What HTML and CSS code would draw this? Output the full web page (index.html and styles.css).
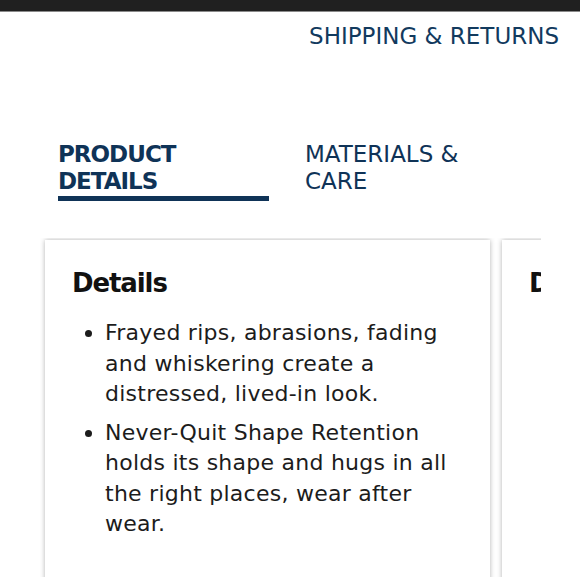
FILE: index.html
```html
<!DOCTYPE html>
<html>
<head>
<meta charset="utf-8">
<link rel="stylesheet" href="styles.css">
</head>
<body>
<div class="topbar"></div>
<div class="shiprow"><a class="ship">SHIPPING &amp; RETURNS</a></div>
<div class="tabs">
  <div class="tab active">PRODUCT<br>DETAILS</div>
  <div class="tab">MATERIALS &amp;<br>CARE</div>
</div>
<div class="viewport">
  <div class="track">
    <section class="card">
      <h2 class="card-title">Details</h2>
      <ul class="list">
        <li>Frayed rips, abrasions, fading and whiskering create a distressed, lived-in look.</li>
        <li>Never-Quit Shape Retention holds its shape and hugs in all the right places, wear after wear.</li>
      </ul>
    </section>
    <section class="card">
      <h2 class="card-title">Details</h2>
    </section>
  </div>
</div>
</body>
</html>
```
FILE: styles.css
```css
html, body { margin: 0; padding: 0; background: #fff; }
body { font-family: "DejaVu Sans", sans-serif; width: 580px; height: 577px; overflow: hidden; }
.topbar { height: 11px; background: #202020; border-bottom: 1px solid #8a8a8a; }
.shiprow { display: flex; justify-content: flex-end; padding: 9px 21px 0 0; }
.ship { color: #123a5e; font-size: 23px; line-height: 30px; }
.tabs { display: flex; padding: 90px 0 0 58px; gap: 36px; }
.tab { color: #0f3357; font-size: 23px; line-height: 27px; }
.tab.active { font-weight: 700; letter-spacing: -1px; width: 211px; padding-bottom: 1px; border-bottom: 5px solid #0f3357; }
.viewport { margin: 37px 0 0 40px; width: 501px; height: 340px; overflow: hidden; padding-top: 2px; }
.track { display: flex; gap: 12px; padding-left: 5px; }
.card { flex: 0 0 445px; height: 360px; background: #fff; box-shadow: 0 0 5px rgba(0,0,0,0.3); box-sizing: border-box; padding: 25px 28px 25px 27px; }
.card-title { margin: 0; font-size: 26px; font-weight: 700; letter-spacing: -1.1px; color: #111; line-height: 36px; }
.list { margin: 17px 0 0; padding: 0 0 0 33px; color: #1c1c1c; font-size: 22px; line-height: 30.5px; letter-spacing: 0.25px; }
.list li { margin-bottom: 8px; }
```
